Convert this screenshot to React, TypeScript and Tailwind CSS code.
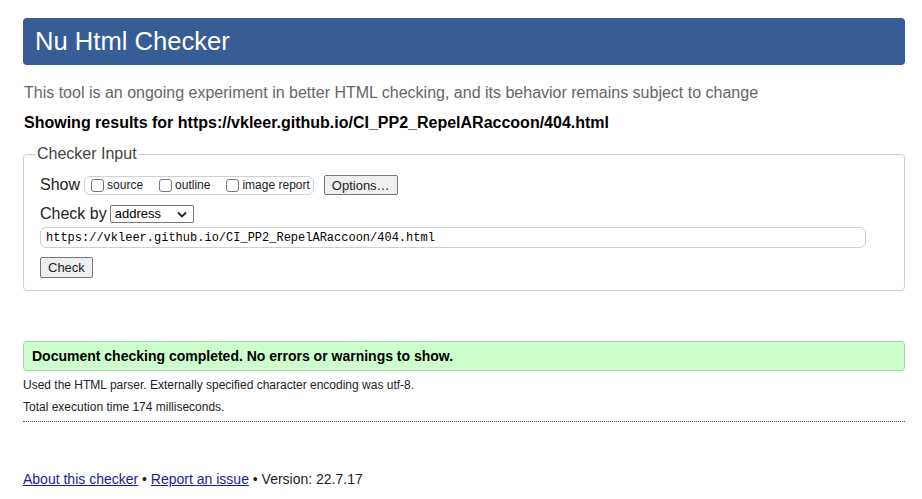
import React from 'react'

const sans = { fontFamily: '"Liberation Sans", Arial, sans-serif' }

function ShowOptions() {
  const items = ['source', 'outline', 'image report']
  return (
    <span className="inline-flex items-center h-[19px] border border-[#cfcfcf] rounded-[6px] pl-[6px] pr-[3px] gap-[16px] text-[12px] text-[#222]">
      {items.map((label) => (
        <label key={label} className="inline-flex items-center gap-[3px]">
          <span className="inline-block w-[13px] h-[13px] border border-[#767676] rounded-[3px] bg-white" />
          {label}
        </label>
      ))}
    </span>
  )
}

export default function App() {
  return (
    <div className="min-h-[499px] bg-white text-[#222] pl-[23px] pr-[17px] pt-[18px]" style={sans}>
      <div className="h-[47px] bg-[#365d95] rounded-[4px] flex items-center pl-[12px]">
        <h1 className="text-white text-[25.6px] leading-none">Nu Html Checker</h1>
      </div>

      <p className="mt-[19px] text-[16px] leading-[18px] text-[#666] pl-[1px]">
        This tool is an ongoing experiment in better HTML checking, and its behavior remains subject to change
      </p>
      <p className="mt-[12px] text-[16px] leading-[18px] font-bold text-black pl-[1px]">
        Showing results for https://vkleer.github.io/CI_PP2_RepelARaccoon/404.html
      </p>

      <fieldset className="mt-[10px] border border-[#cfcfcf] rounded-[4px] pl-[16px] pr-[38px] pb-[12px] pt-[8px]">
        <legend className="text-[16px] text-[#444] px-[1px] ml-[-4px]">Checker Input</legend>
        <div className="flex items-center h-[22px]">
          <span className="text-[16px] mr-[4px]">Show</span>
          <ShowOptions />
          <button className="ml-[10px] h-[20px] px-[7px] text-[13px] bg-[#efefef] border border-[#767676] rounded-[2px]">
            Options…
          </button>
        </div>
        <div className="flex items-center h-[22px] mt-[7px]">
          <span className="text-[16px] mr-[3px]">Check by</span>
          <div className="h-[18px] w-[84px] border border-[#767676] rounded-[2px] flex items-center justify-between pl-[4px] pr-[6px] text-[13px] text-black">
            <span>address</span>
            <svg width="10" height="7" viewBox="0 0 10 7">
              <path d="M1 1.5 L5 5.5 L9 1.5" fill="none" stroke="#222" strokeWidth="1.8" />
            </svg>
          </div>
        </div>
        <div className="mt-[2px] h-[21px] border border-[#cfcfcf] rounded-[6px] flex items-center pl-[5px] text-[12px] text-black" style={{ fontFamily: '"Liberation Mono", "DejaVu Sans Mono", monospace' }}>
          https://vkleer.github.io/CI_PP2_RepelARaccoon/404.html
        </div>
        <button className="mt-[9px] h-[21px] px-[7px] text-[13px] bg-[#efefef] border border-[#767676] rounded-[2px] block">
          Check
        </button>
      </fieldset>

      <div className="mt-[50px] h-[30px] bg-[#ccffcc] border border-[#a9d4a9] rounded-[4px] flex items-center pl-[8px]">
        <p className="text-[14px] font-bold text-black">Document checking completed. No errors or warnings to show.</p>
      </div>
      <p className="mt-[7px] text-[12px] leading-[14px] text-[#222]">
        Used the HTML parser. Externally specified character encoding was utf-8.
      </p>
      <p className="mt-[8px] text-[12px] leading-[14px] text-[#222]">Total execution time 174 milliseconds.</p>
      <div className="mt-[7px] border-t border-dotted border-[#444]" />

      <p className="mt-[47px] text-[14px] text-[#222]">
        <a href="#" className="text-[#1a1aa6] underline">About this checker</a>
        {' • '}
        <a href="#" className="text-[#1a1aa6] underline">Report an issue</a>
        {' • Version: 22.7.17'}
      </p>
    </div>
  )
}
